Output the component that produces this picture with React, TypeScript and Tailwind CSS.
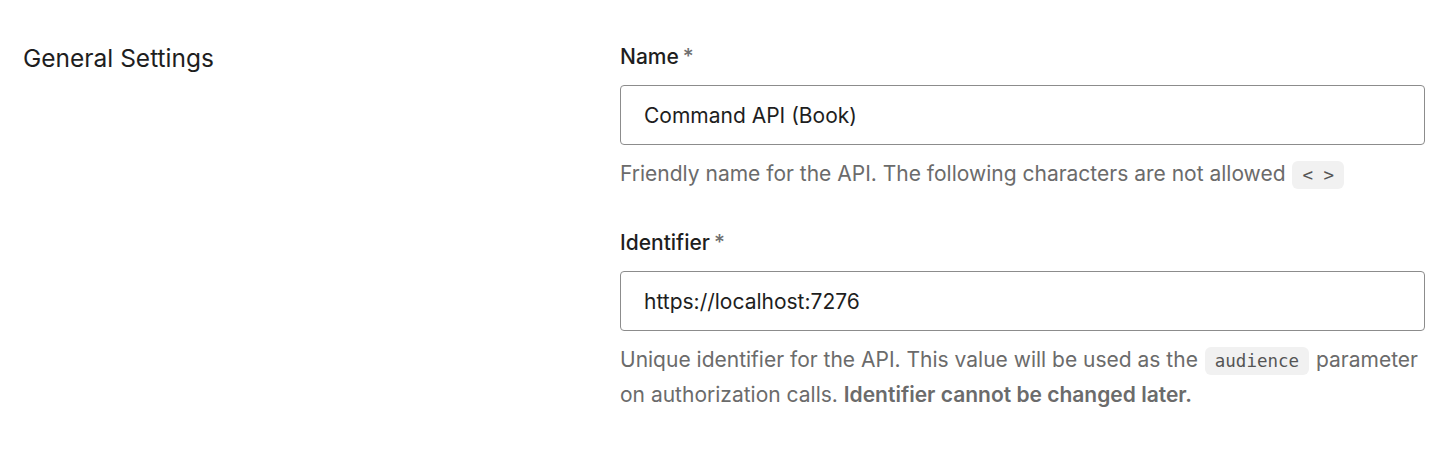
import React from 'react'

function Code({ children }: { children: React.ReactNode }) {
  return (
    <code className="mx-[1px] rounded-[6px] bg-[#f1f1f1] px-[10px] py-[4px] font-['DejaVu_Sans_Mono',monospace] text-[17.5px] text-[#555]">
      {children}
    </code>
  )
}

function Field({
  label,
  value,
  children,
}: {
  label: string
  value: string
  children: React.ReactNode
}) {
  return (
    <div>
      <label className="block text-[21px] font-medium leading-[30px] text-[#1e1e1e]">
        {label}
        <span className="ml-[4px] text-[#6f6f6f]">*</span>
      </label>
      <input
        readOnly
        value={value}
        className="mt-[13px] block h-[60px] w-full rounded-[4px] border border-[#8c8c8c] bg-white px-[23px] text-[21px] text-[#1e1e1e] outline-none"
      />
      <p className="mt-[12px] text-[21px] leading-[33px] text-[#6b6b6b]">{children}</p>
    </div>
  )
}

export default function App() {
  return (
    <div className="min-h-screen bg-white font-['Inter',sans-serif]">
      <div className="flex pl-[23px] pr-[24px]">
        <div className="w-[597px] shrink-0 pt-[41px]">
          <h2 className="text-[24.5px] leading-[34px] text-[#1e1e1e]">General Settings</h2>
        </div>
        <div className="flex flex-1 flex-col gap-[36px] pt-[42px]">
          <Field label="Name" value="Command API (Book)">
            Friendly name for the API. The following characters are not allowed <Code>&lt; &gt;</Code>
          </Field>
          <Field label="Identifier" value="https://localhost:7276">
            Unique identifier for the API. This value will be used as the <Code>audience</Code> parameter
            on authorization calls. <strong className="font-semibold">Identifier cannot be changed later.</strong>
          </Field>
        </div>
      </div>
    </div>
  )
}
